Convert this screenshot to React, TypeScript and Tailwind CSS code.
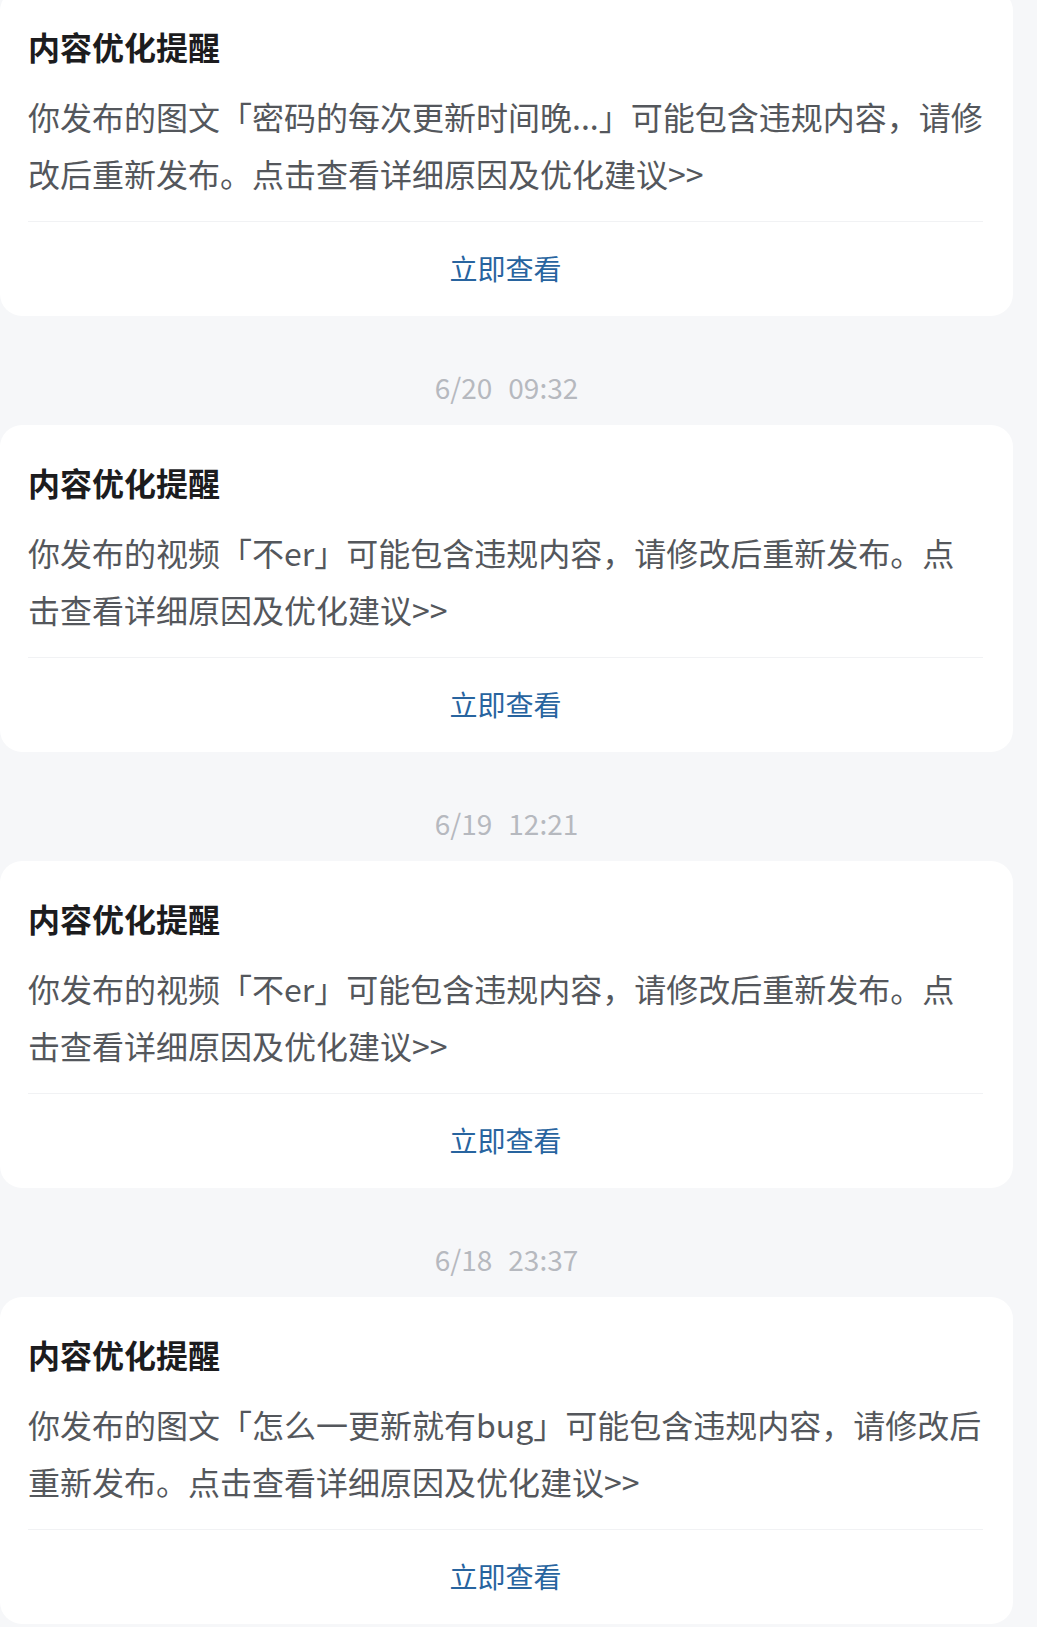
import React from "react";

type Item = { date?: string; time?: string; lines: string[] };

const items: Item[] = [
  { lines: ["你发布的图文「密码的每次更新时间晚...」可能包含违规内容，请修", "改后重新发布。点击查看详细原因及优化建议>>"] },
  { date: "6/20", time: "09:32", lines: ["你发布的视频「不er」可能包含违规内容，请修改后重新发布。点", "击查看详细原因及优化建议>>"] },
  { date: "6/19", time: "12:21", lines: ["你发布的视频「不er」可能包含违规内容，请修改后重新发布。点", "击查看详细原因及优化建议>>"] },
  { date: "6/18", time: "23:37", lines: ["你发布的图文「怎么一更新就有bug」可能包含违规内容，请修改后", "重新发布。点击查看详细原因及优化建议>>"] },
];

function Card({ lines }: { lines: string[] }) {
  return (
    <div className="w-[1013px] h-[327px] shrink-0 rounded-[22px] bg-white pl-[28px] pr-[30px] pt-[35px] flex flex-col">
      <div className="text-[32px] leading-[44px] font-bold text-[#1c1c1e]">内容优化提醒</div>
      <div className="mt-[20px] text-[32px] leading-[57px] text-[#54575c]">
        {lines.map((l, i) => (
          <div key={i} className="whitespace-nowrap">{l}</div>
        ))}
      </div>
      <div className="mt-[19px] h-px bg-[#f1f2f4]" />
      <div className="h-[94px] flex items-center justify-center pb-[3px]">
        <span className="text-[28px] leading-[40px] text-[#28649f]">立即查看</span>
      </div>
    </div>
  );
}

export default function App() {
  return (
    <div
      className="w-[1037px] h-[1627px] overflow-hidden bg-[#f6f7f9]"
      style={{ fontFamily: '"Noto Sans CJK SC", "Noto Sans", sans-serif' }}
    >
      <div className="flex flex-col w-[1013px] mt-[-11px]">
        {items.map((it, idx) => (
          <React.Fragment key={idx}>
            {it.date && (
              <div className="mt-[51px] mb-[18px] h-[40px] flex items-center justify-center gap-[16px] text-[28px] leading-[40px] text-[#b6b9bf]">
                <span>{it.date}</span>
                <span>{it.time}</span>
              </div>
            )}
            <Card lines={it.lines} />
          </React.Fragment>
        ))}
      </div>
    </div>
  );
}
